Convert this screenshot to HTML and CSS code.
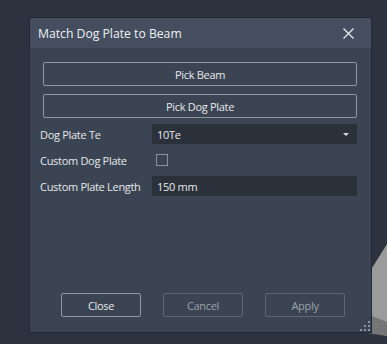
FILE: index.html
```html
<!DOCTYPE html>
<html lang="en">
<head>
    <meta charset="UTF-8">
    <title>Match Dog Plate to Beam</title>
    <link rel="stylesheet" href="styles.css">
</head>
<body>
    <svg class="scene" width="40" height="100" viewBox="0 0 40 100">
        <polygon points="40,0 25,24 25,88 40,92" fill="#9b9b9b"/>
        <polygon points="25,72 40,78 40,92 0,86 25,86" fill="#757575"/>
    </svg>

    <div class="dialog">
        <div class="title-bar">
            <span class="title">Match Dog Plate to Beam</span>
            <svg class="close" width="11" height="11" viewBox="0 0 11 11">
                <path d="M0.5 0.5 L10.5 10.5 M10.5 0.5 L0.5 10.5" stroke="#e6e8ec" stroke-width="1.3"/>
            </svg>
        </div>

        <div class="content">
            <button class="pick">Pick Beam</button>
            <button class="pick">Pick Dog Plate</button>

            <div class="form">
                <div class="row">
                    <label>Dog Plate Te</label>
                    <div class="field select">
                        <span>10Te</span>
                        <span class="arrow"></span>
                    </div>
                </div>
                <div class="row">
                    <label>Custom Dog Plate</label>
                    <div class="check-cell"><span class="checkbox"></span></div>
                </div>
                <div class="row">
                    <label>Custom Plate Length</label>
                    <div class="field">150 mm</div>
                </div>
            </div>

            <div class="footer">
                <button class="action">Close</button>
                <button class="action disabled">Cancel</button>
                <button class="action disabled">Apply</button>
            </div>
        </div>

        <div class="grip">
            <i></i><i></i><i></i><i></i><i></i><i></i>
        </div>
    </div>
</body>
</html>
```

FILE: styles.css
```css
body {
    margin: 0;
    padding: 17px 0 0 29px;
    height: 344px;
    box-sizing: border-box;
    background-color: #2c323e;
    font-family: 'Open Sans', 'Noto Sans', sans-serif;
    font-size: 11px;
    letter-spacing: -0.3px;
    color: #e6e8ec;
    overflow: hidden;
    position: relative;
}

.scene {
    position: absolute;
    right: 0;
    bottom: 0;
}

.dialog {
    position: relative;
    width: 343px;
    height: 316px;
    box-sizing: border-box;
    background-color: #3b4452;
    border: 1px solid #222833;
    display: flex;
    flex-direction: column;
}

.title-bar {
    height: 30px;
    background-color: #444e5f;
    display: flex;
    align-items: center;
    justify-content: space-between;
    padding: 0 17px 0 8px;
    flex-shrink: 0;
}

.title {
    font-size: 12.2px;
    letter-spacing: 0;
    color: #eef0f3;
}

.close {
    display: block;
}

.content {
    flex: 1;
    display: flex;
    flex-direction: column;
    padding: 14px 14px 15px 10px;
}

button {
    font-family: inherit;
    font-size: 11px;
    letter-spacing: -0.3px;
    background-color: #3b4452;
    color: #e6e8ec;
    border: 1px solid #8d96a3;
    border-radius: 2px;
    height: 24px;
    padding: 0;
}

.pick {
    margin: 0 0 8px 3px;
    width: 314px;
}

.form {
    margin-top: -2px;
    display: flex;
    flex-direction: column;
    gap: 6px;
}

.row {
    display: flex;
    align-items: center;
    height: 20px;
}

label {
    width: 112px;
    flex-shrink: 0;
    white-space: nowrap;
}

.field {
    width: 207px;
    height: 20px;
    box-sizing: border-box;
    background-color: #2b313b;
    padding: 0 5px;
    display: flex;
    align-items: center;
    justify-content: space-between;
}

.arrow {
    width: 0;
    height: 0;
    border-left: 3px solid transparent;
    border-right: 3px solid transparent;
    border-top: 3px solid #d8dbe0;
    margin-right: 3px;
}

.check-cell {
    padding-left: 4px;
}

.checkbox {
    display: block;
    width: 12px;
    height: 12px;
    box-sizing: border-box;
    border: 1px solid #8a929e;
}

.footer {
    margin-top: auto;
    display: flex;
    gap: 22px;
    padding-left: 21px;
}

.action {
    width: 80px;
}

.disabled {
    color: #9aa1ac;
    border-color: #5e6674;
}

.grip {
    position: absolute;
    right: 1px;
    bottom: 1px;
    width: 10px;
    height: 10px;
    display: grid;
    grid-template-columns: repeat(3, 2px);
    grid-template-rows: repeat(3, 2px);
    gap: 2px;
    justify-content: end;
    align-content: end;
}

.grip i {
    background-color: #8a929e;
}

.grip i:nth-child(1) { grid-area: 1 / 3; }
.grip i:nth-child(2) { grid-area: 2 / 2; }
.grip i:nth-child(3) { grid-area: 2 / 3; }
.grip i:nth-child(4) { grid-area: 3 / 1; }
.grip i:nth-child(5) { grid-area: 3 / 2; }
.grip i:nth-child(6) { grid-area: 3 / 3; }
```
